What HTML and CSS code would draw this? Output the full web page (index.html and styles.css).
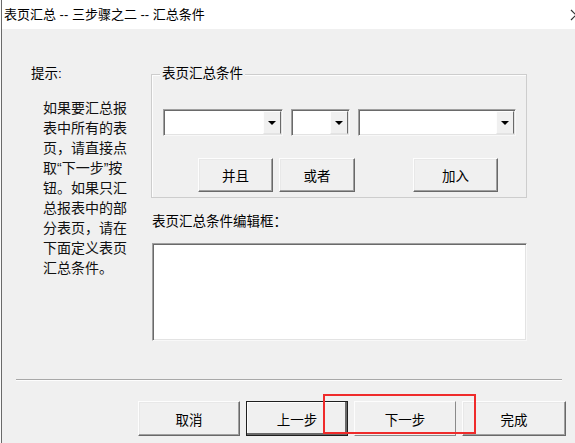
FILE: index.html
```html
<!DOCTYPE html>
<html lang="zh-CN">
<head>
<meta charset="utf-8">
<title>表页汇总</title>
<link rel="stylesheet" href="styles.css">
</head>
<body>
<div class="window">
  <div class="frame">
    <div class="titlebar">
      <span class="title">表页汇总 -- 三步骤之二 -- 汇总条件</span>
      <svg class="close" width="12" height="12" viewBox="0 0 12 12"><path d="M1 1 L11 11 M11 1 L1 11" stroke="#333" stroke-width="1.2" fill="none"/></svg>
    </div>
    <div class="main">
      <div class="tips">
        <div class="tip-label">提示:</div>
        <p class="tip-text">如果要汇总报<br>表中所有的表<br>页，请直接点<br>取“下一步”按<br>钮。如果只汇<br>总报表中的部<br>分表页，请在<br>下面定义表页<br>汇总条件。</p>
      </div>
      <div class="panel">
        <div class="group">
          <span class="group-title">表页汇总条件</span>
          <div class="combo-row">
            <div class="combo combo-a"><span class="combo-btn"><i class="caret"></i></span></div>
            <div class="combo combo-b"><span class="combo-btn"><i class="caret"></i></span></div>
            <div class="combo combo-c"><span class="combo-btn"><i class="caret"></i></span></div>
          </div>
          <div class="op-row">
            <button class="btn op-and">并且</button>
            <button class="btn op-or">或者</button>
            <button class="btn op-add">加入</button>
          </div>
        </div>
        <div class="editor-label">表页汇总条件编辑框：</div>
        <div class="editor"></div>
      </div>
    </div>
    <div class="separator"></div>
    <div class="footer">
      <button class="btn foot-btn">取消</button>
      <button class="btn foot-btn btn-default">上一步</button>
      <button class="btn foot-btn btn-flat">下一步</button>
      <button class="btn foot-btn btn-finish">完成</button>
    </div>
  </div>
  <div class="highlight"></div>
</div>
</body>
</html>
```
FILE: styles.css
```css
html, body {
  margin: 0;
  padding: 0;
  overflow: hidden;
  background: #f0f0f0;
}
body {
  font-family: "Liberation Sans", "Noto Sans CJK SC", sans-serif;
  color: #000;
}
.window {
  position: relative;
  width: 575px;
  height: 443px;
  box-sizing: border-box;
  border-left: 1px solid #fafafa;
  background: #f0f0f0;
}
.frame {
  height: 100%;
  border-left: 1px solid #6a6a6a;
  display: flex;
  flex-direction: column;
}
.titlebar {
  height: 29px;
  flex: none;
  background: #fff;
  display: flex;
  align-items: center;
  justify-content: space-between;
  padding-left: 2px;
  padding-bottom: 2px;
  box-sizing: border-box;
}
.title {
  font-size: 13px;
  white-space: nowrap;
}
.close {
  margin-right: -7px;
  margin-top: 2px;
}
.main {
  height: 350px;
  flex: none;
  display: flex;
}
.tips {
  width: 149px;
  flex: none;
}
.tip-label {
  margin: 35px 0 0 29px;
  font-size: 13.5px;
  line-height: 20px;
}
.tip-text {
  margin: 14px 0 0 41px;
  font-size: 14px;
  line-height: 20px;
  white-space: nowrap;
  color: #111;
}
.panel {
  width: 376px;
  padding-top: 45px;
}
.group {
  position: relative;
  height: 124px;
  box-sizing: border-box;
  border: 1px solid #cdcdcd;
  box-shadow: inset 1px 1px 0 #fdfdfd;
  padding: 34px 0 0 11px;
}
.group-title {
  position: absolute;
  top: -9px;
  left: 8px;
  padding: 0 2px;
  background: #f0f0f0;
  font-size: 13.5px;
  line-height: 16px;
}
.combo-row {
  display: flex;
  gap: 8px;
  height: 27px;
}
.combo {
  box-sizing: border-box;
  height: 27px;
  background: #fff;
  border: 1px solid;
  border-color: #a0a0a0 #f8f8f8 #f8f8f8 #a0a0a0;
  box-shadow: inset 1px 1px 0 #6a6a6a, inset -1px -1px 0 #e3e3e3;
  display: flex;
  justify-content: flex-end;
  padding: 1px;
}
.combo-a { width: 120px; }
.combo-b { width: 59px; }
.combo-c { width: 158px; }
.combo-btn {
  width: 18px;
  background: #f0f0f0;
  display: flex;
  align-items: center;
  justify-content: center;
  box-sizing: border-box;
  border-right: 1px solid #6a6a6a;
  border-bottom: 1px solid #e3e3e3;
  border-left: 1px solid #fdfdfd;
  border-top: 1px solid #fdfdfd;
}
.caret {
  width: 0;
  height: 0;
  border-left: 4px solid transparent;
  border-right: 4px solid transparent;
  border-top: 4px solid #000;
}
.op-row {
  display: flex;
  gap: 6px;
  margin-top: 22px;
  padding-left: 35px;
}
.btn {
  font-family: "Liberation Sans", "Noto Sans CJK SC", sans-serif;
  font-size: 13.5px;
  color: #000;
  background: #f0f0f0;
  box-sizing: border-box;
  border: 1px solid;
  border-color: #fdfdfd #696969 #696969 #fdfdfd;
  box-shadow: inset -1px -1px 0 #a0a0a0, inset 1px 1px 0 #e8e8e8;
  padding: 0;
  margin: 0;
  height: 34px;
}
.op-and { width: 75px; }
.op-or { width: 76px; }
.op-add { width: 85px; margin-left: 52px; }
.editor-label {
  margin-top: 14px;
  padding-left: 1px;
  font-size: 13.5px;
  line-height: 20px;
}
.editor {
  margin: 11px 0 0 1px;
  width: 375px;
  height: 98px;
  box-sizing: border-box;
  background: #fff;
  border: 1px solid;
  border-color: #a0a0a0 #f8f8f8 #f8f8f8 #a0a0a0;
  box-shadow: inset 1px 1px 0 #6a6a6a, inset -1px -1px 0 #e3e3e3;
}
.separator {
  flex: none;
  margin: 0 13px 0 14px;
  border-top: 1px solid #a8a8a8;
  border-bottom: 1px solid #fdfdfd;
}
.footer {
  display: flex;
  gap: 6px;
  padding: 20px 0 0 136px;
}
.foot-btn {
  width: 102px;
  height: 35px;
}
.btn-default {
  border-color: #1e1e1e;
  box-shadow: inset -2px -2px 0 #696969, inset 1px 1px 0 #fdfdfd;
}
.btn-flat {
  border-color: #fdfdfd #8a8a8a #8a8a8a #fdfdfd;
  box-shadow: none;
}
.btn-finish {
  width: 104px;
}
.highlight {
  position: absolute;
  left: 322px;
  top: 394px;
  width: 153px;
  height: 40px;
  box-sizing: border-box;
  border: 2px solid #ef2b2b;
}
```
